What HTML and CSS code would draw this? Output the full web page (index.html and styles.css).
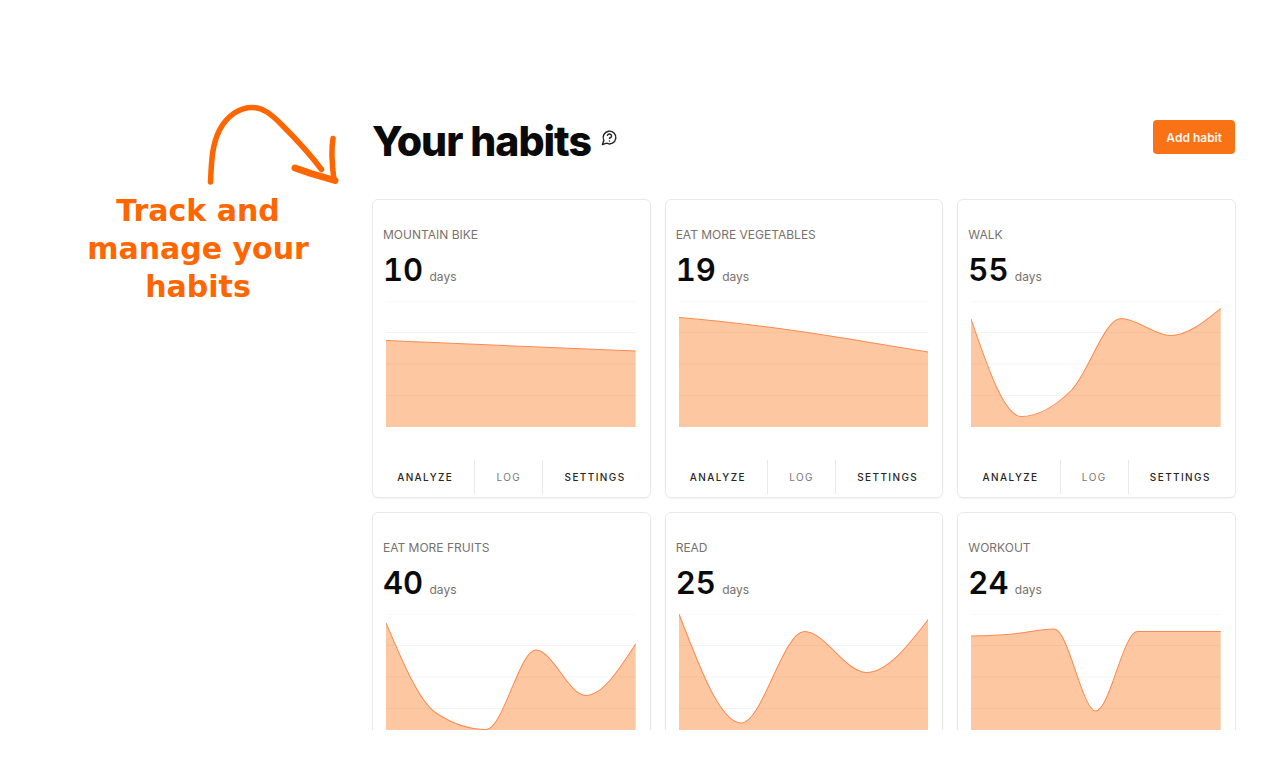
FILE: index.html
```
<!DOCTYPE html>
<html lang="en">
<head>
<meta charset="utf-8">
<meta name="viewport" content="width=device-width, initial-scale=1">
<title>Your habits</title>
<link rel="stylesheet" href="styles.css">
</head>
<body>
<main class="page">
  <aside class="callout">
    <svg class="callout-arrow" viewBox="204 102 136 86" aria-hidden="true">
      <path d="M210.500 182C211.500 160 212 145 219.500 130C228 114 241 107.500 252 107.500C263 107.500 271 114 281 124C297 140 310 154 321.500 169.500" stroke-width="5.500"/>
      <path d="M333 138.500C331 150 332 165 334 180" stroke-width="5.500"/>
      <path d="M295 168L311 173.500L335 180.500" stroke-width="7"/>
    </svg>
    <p class="callout-text">Track and manage your habits</p>
  </aside>

  <section class="panel">
    <header class="panel-header">
      <h1 class="title">Your habits</h1>
      <button class="help" type="button" aria-label="Help">
        <svg viewBox="0 0 24 24" aria-hidden="true"><path d="M7.900 20A9 9 0 1 0 4 16.100L2 22Z"/><path d="M9.090 9a3 3 0 0 1 5.830 1c0 2-3 3-3 3"/><path d="M12 17h.01"/></svg>
      </button>
      <button class="add" type="button">Add habit</button>
    </header>

    <div class="cards">
      <article class="card">
        <h2 class="name">Mountain bike</h2>
        <p class="count"><strong>10</strong> <span>days</span></p>
        <svg class="chart" viewBox="0 0 249 126" preserveAspectRatio="none" aria-hidden="true">
          <path class="grid" d="M0 31.500H249M0 63H249M0 94.500H249"/><path class="grid faint" d="M0 .5H249"/>
          <path class="area" d="M0 39.500L249 50V126H0Z"/><path class="line" d="M0 39.500L249 50"/>
        </svg>
        <footer class="actions"><button type="button">Analyze</button><button type="button" class="log">Log</button><button type="button">Settings</button></footer>
      </article>
      <article class="card">
        <h2 class="name">Eat more vegetables</h2>
        <p class="count"><strong>19</strong> <span>days</span></p>
        <svg class="chart" viewBox="0 0 249 126" preserveAspectRatio="none" aria-hidden="true">
          <path class="grid" d="M0 31.500H249M0 63H249M0 94.500H249"/><path class="grid faint" d="M0 .5H249"/>
          <path class="area" d="M0 16.500C42 20 83 25 125 31C166 37 208 44.500 249 51V126H0Z"/><path class="line" d="M0 16.500C42 20 83 25 125 31C166 37 208 44.500 249 51"/>
        </svg>
        <footer class="actions"><button type="button">Analyze</button><button type="button" class="log">Log</button><button type="button">Settings</button></footer>
      </article>
      <article class="card">
        <h2 class="name">Walk</h2>
        <p class="count"><strong>55</strong> <span>days</span></p>
        <svg class="chart" viewBox="0 0 249 126" preserveAspectRatio="none" aria-hidden="true">
          <path class="grid" d="M0 31.500H249M0 63H249M0 94.500H249"/><path class="grid faint" d="M0 .5H249"/>
          <path class="area" d="M0 18C16.700 66.800 33.300 115.500 50 115.500C66.700 115.500 83.300 105.900 100 89.500C116.600 73.100 133 17.500 149.500 17.500C166 17.500 182.500 34.500 199 34.500C216 34.500 232.500 20.900 249 7.500V126H0Z"/><path class="line" d="M0 18C16.700 66.800 33.300 115.500 50 115.500C66.700 115.500 83.300 105.900 100 89.500C116.600 73.100 133 17.500 149.500 17.500C166 17.500 182.500 34.500 199 34.500C216 34.500 232.500 20.900 249 7.500"/>
        </svg>
        <footer class="actions"><button type="button">Analyze</button><button type="button" class="log">Log</button><button type="button">Settings</button></footer>
      </article>
      <article class="card">
        <h2 class="name">Eat more fruits</h2>
        <p class="count"><strong>40</strong> <span>days</span></p>
        <svg class="chart" viewBox="0 0 249 126" preserveAspectRatio="none" aria-hidden="true">
          <path class="grid" d="M0 31.500H249M0 63H249M0 94.500H249"/><path class="grid faint" d="M0 .5H249"/>
          <path class="area" d="M0 9C16.700 48.400 33.300 87.800 50 99C66.700 110.200 83 115.500 100 115.500C116.600 115.500 133 36 149.500 36C166 36 182.500 81.500 199 81.500C216 81.500 232.500 55.700 249 30V126H0Z"/><path class="line" d="M0 9C16.700 48.400 33.300 87.800 50 99C66.700 110.200 83 115.500 100 115.500C116.600 115.500 133 36 149.500 36C166 36 182.500 81.500 199 81.500C216 81.500 232.500 55.700 249 30"/>
        </svg>
        <footer class="actions"><button type="button">Analyze</button><button type="button" class="log">Log</button><button type="button">Settings</button></footer>
      </article>
      <article class="card">
        <h2 class="name">Read</h2>
        <p class="count"><strong>25</strong> <span>days</span></p>
        <svg class="chart" viewBox="0 0 249 126" preserveAspectRatio="none" aria-hidden="true">
          <path class="grid" d="M0 31.500H249M0 63H249M0 94.500H249"/><path class="grid faint" d="M0 .5H249"/>
          <path class="area" d="M0 0C20.800 54.500 41.500 109 62 109C83 109 104 17.500 125 17.500C145.500 17.500 166 58.500 187 58.500C208 58.500 228 32 249 5V126H0Z"/><path class="line" d="M0 0C20.800 54.500 41.500 109 62 109C83 109 104 17.500 125 17.500C145.500 17.500 166 58.500 187 58.500C208 58.500 228 32 249 5"/>
        </svg>
        <footer class="actions"><button type="button">Analyze</button><button type="button" class="log">Log</button><button type="button">Settings</button></footer>
      </article>
      <article class="card">
        <h2 class="name">Workout</h2>
        <p class="count"><strong>24</strong> <span>days</span></p>
        <svg class="chart" viewBox="0 0 249 126" preserveAspectRatio="none" aria-hidden="true">
          <path class="grid" d="M0 31.500H249M0 63H249M0 94.500H249"/><path class="grid faint" d="M0 .5H249"/>
          <path class="area" d="M0 22C14 21.800 28 21.500 41.500 20C55 18.500 69 15 83 15C97 15 111 97 124.500 97C138 97 152 17.500 166 17.500H249V126H0Z"/><path class="line" d="M0 22C14 21.800 28 21.500 41.500 20C55 18.500 69 15 83 15C97 15 111 97 124.500 97C138 97 152 17.500 166 17.500H249"/>
        </svg>
        <footer class="actions"><button type="button">Analyze</button><button type="button" class="log">Log</button><button type="button">Settings</button></footer>
      </article>
    </div>
  </section>
</main>
</body>
</html>
```
FILE: styles.css
```
* { box-sizing: border-box; }
body {
  margin: 0;
  background: #fff;
  color: #0a0a0a;
  font-family: Inter, sans-serif;
}
h1, h2, p { margin: 0; }
button {
  margin: 0;
  border: 0;
  background: none;
  font-family: inherit;
  cursor: pointer;
}
.page {
  display: flex;
  gap: 32px;
  height: 100vh;
  padding: 0 34px 30px 56px;
}
.callout {
  display: flex;
  flex: 0 0 284px;
  flex-direction: column;
  padding-top: 102px;
}
.callout-arrow {
  align-self: flex-end;
  width: 136px;
  height: 86px;
  fill: none;
  stroke: #f60;
  stroke-linecap: round;
  stroke-linejoin: round;
}
.callout-text {
  padding: 4px 28px 0;
  color: #f60;
  font: bold 30px/38px "DejaVu Sans", sans-serif;
  text-align: center;
}
.panel {
  flex: 1;
  min-width: 0;
  padding-top: 116px;
  overflow: hidden;
}
.panel-header {
  display: flex;
  align-items: flex-start;
  height: 83px;
}
.title {
  font-size: 41px;
  font-weight: 800;
  line-height: 50px;
  letter-spacing: -0.025em;
}
.help {
  margin: 13px 0 0 10px;
  padding: 0;
  line-height: 0;
}
.help svg {
  width: 17px;
  height: 17px;
  fill: none;
  stroke: #222;
  stroke-width: 2;
  stroke-linecap: round;
  stroke-linejoin: round;
}
.add {
  height: 34px;
  margin: 4px 1px 0 auto;
  padding: 0 13px;
  border-radius: 4px;
  background: #f97316;
  color: #fff5ee;
  font-size: 12px;
  font-weight: 600;
}
.cards {
  display: grid;
  grid-template-columns: repeat(3, minmax(0, 1fr));
  gap: 14px;
}
.card {
  display: flex;
  flex-direction: column;
  padding: 25px 3px 3px;
  border: 1px solid #e9e9e9;
  border-radius: 6px;
  box-shadow: 0 1px 2px rgba(0, 0, 0, 0.05);
}
.name {
  padding: 0 7px;
  color: #78716c;
  font-size: 12px;
  font-weight: 400;
  line-height: 20px;
  text-transform: uppercase;
}
.count {
  padding: 5px 7px 0;
  color: #78716c;
  font-size: 12px;
  line-height: 40px;
}
.count strong {
  margin-right: 3px;
  color: #0a0a0a;
  font-size: 31px;
  font-weight: 600;
  font-variant-numeric: tabular-nums;
}
.chart {
  display: block;
  width: calc(100% - 21px);
  height: 126px;
  margin: 4px 11px 33px 10px;
  fill: none;
}
.grid { stroke: #f3f3f3; }
.faint { stroke: #f9f9f9; }
.area { fill: rgba(249, 115, 22, 0.4); }
.line { stroke: #fb8a50; }
.actions { display: flex; }
.actions button {
  flex: 1 0 auto;
  height: 34px;
  padding: 0 20px;
  color: #292524;
  font-size: 10px;
  font-weight: 500;
  letter-spacing: 0.14em;
  text-transform: uppercase;
}
.actions .log {
  border: solid #e9e9e9;
  border-width: 0 1px;
  color: #777;
  font-weight: 400;
}
```
